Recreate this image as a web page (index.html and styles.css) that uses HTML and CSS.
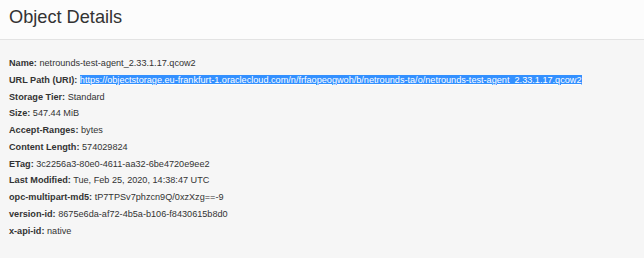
FILE: index.html
```html
<!DOCTYPE html>
<html>
<head>
<meta charset="utf-8">
<link rel="stylesheet" href="styles.css">
</head>
<body>
<div class="header"><h1 class="title">Object Details</h1></div>
<div class="details">
  <div class="row"><span class="label">Name:</span> netrounds-test-agent_2.33.1.17.qcow2</div>
  <div class="row"><span class="label">URL Path (URI):</span> <a class="link selected" href="#">https://objectstorage.eu-frankfurt-1.oraclecloud.com/n/frfaopeogwoh/b/netrounds-ta/o/netrounds-test-agent_2.33.1.17.qcow2</a></div>
  <div class="row"><span class="label">Storage Tier:</span> Standard</div>
  <div class="row"><span class="label">Size:</span> 547.44 MiB</div>
  <div class="row"><span class="label">Accept-Ranges:</span> bytes</div>
  <div class="row"><span class="label">Content Length:</span> 574029824</div>
  <div class="row"><span class="label">ETag:</span> 3c2256a3-80e0-4611-aa32-6be4720e9ee2</div>
  <div class="row"><span class="label">Last Modified:</span> Tue, Feb 25, 2020, 14:38:47 UTC</div>
  <div class="row"><span class="label">opc-multipart-md5:</span> tP7TPSv7phzcn9Q/0xzXzg==-9</div>
  <div class="row"><span class="label">version-id:</span> 8675e6da-af72-4b5a-b106-f8430615b8d0</div>
  <div class="row"><span class="label">x-api-id:</span> native</div>
</div>
</body>
</html>
```
FILE: styles.css
```css
html, body {
  margin: 0;
  padding: 0;
  height: 100%;
}
body {
  background: #f6f6f6;
  font-family: "Liberation Sans", Arial, sans-serif;
  color: #333;
}
.header {
  background: #fcfcfc;
  border-bottom: 1px solid #e3e3e3;
  height: 40px;
  box-sizing: border-box;
  padding: 5px 9px 0;
}
.title {
  margin: 0;
  font-size: 18.2px;
  font-weight: normal;
  line-height: 24px;
  color: #333;
}
.details {
  padding: 15px 9px 0;
  font-size: 9.15px;
  line-height: 16.75px;
}
.row {
  white-space: nowrap;
}
.label {
  font-weight: bold;
}
.link {
  color: #fff;
  text-decoration: underline;
}
.selected {
  background: #3390ff;
}
```
